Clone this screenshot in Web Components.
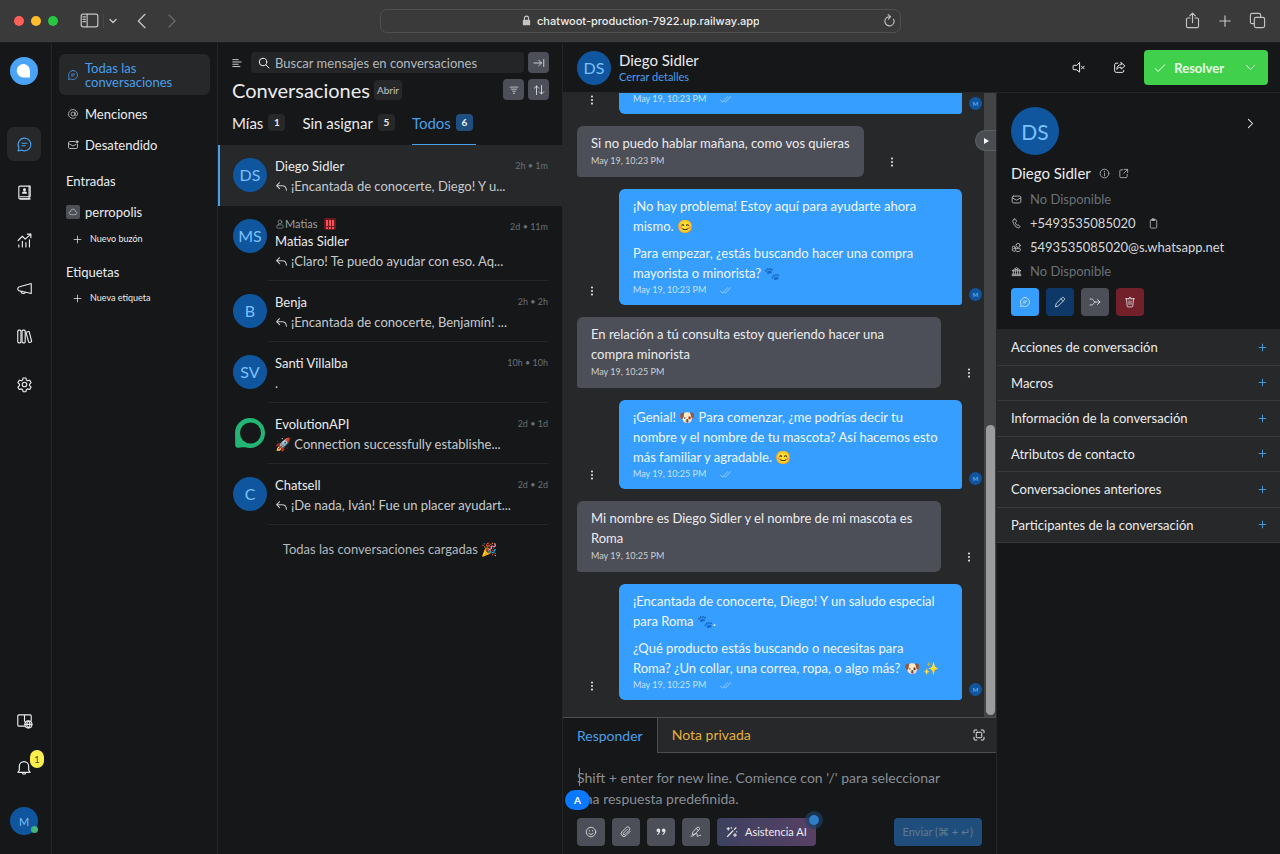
<!DOCTYPE html>
<html lang="es">
<head>
<meta charset="utf-8">
<meta name="viewport" content="width=device-width, initial-scale=1">
<title>Chatwoot</title>
<style>
  :root {
    --bg: #151718;
    --panel: #262829;
    --line: #242627;
    --line-strong: #4c4e52;
    --text: #ececee;
    --muted: #9ba1a6;
    --dim: #697177;
    --blue: #369eff;
    --link: #4a9fea;
    --slate: #4c4f57;
    --avatar: #10569e;
    --avatar-text: #7cc0fb;
  }
  body {
    margin: 0;
    height: 100vh;
    display: flex;
    flex-direction: column;
    overflow: hidden;
    background: var(--bg);
    color: var(--text);
    font: 13px/20px Lato, "Liberation Sans", sans-serif;
  }
  .app { flex: 1; min-height: 0; display: flex; }
  .workspace { flex: 1; min-width: 0; display: flex; flex-direction: column; }
  .columns { flex: 1; min-height: 0; display: flex; }
</style>
</head>
<body>
  <browser-bar></browser-bar>
  <div class="app">
    <nav-rail></nav-rail>
    <side-menu></side-menu>
    <conversation-list>
      <conversation-item initials="DS" name="Diego Sidler" time="2h • 1m" reply active>¡Encantada de conocerte, Diego! Y u...</conversation-item>
      <conversation-item initials="MS" name="Matias Sidler" time="2d • 11m" assignee="Matias" reply>¡Claro! Te puedo ayudar con eso. Aq...</conversation-item>
      <conversation-item initials="B" name="Benja" time="2h • 2h" reply>¡Encantada de conocerte, Benjamín! ...</conversation-item>
      <conversation-item initials="SV" name="Santi Villalba" time="10h • 10h">.</conversation-item>
      <conversation-item logo name="EvolutionAPI" time="2d • 1d">🚀 Connection successfully establishe...</conversation-item>
      <conversation-item initials="C" name="Chatsell" time="2d • 2d" reply>¡De nada, Iván! Fue un placer ayudart...</conversation-item>
    </conversation-list>
    <div class="workspace">
      <chat-header></chat-header>
      <div class="columns">
        <chat-pane>
          <chat-message out time="May 19, 10:23 PM"></chat-message>
          <chat-message time="May 19, 10:23 PM"><p>Si no puedo hablar mañana, como vos quieras</p></chat-message>
          <chat-message out time="May 19, 10:23 PM"><p>¡No hay problema! Estoy aquí para ayudarte ahora<br>mismo. 😊</p><p>Para empezar, ¿estás buscando hacer una compra<br>mayorista o minorista? 🐾</p></chat-message>
          <chat-message wide time="May 19, 10:25 PM"><p>En relación a tú consulta estoy queriendo hacer una<br>compra minorista</p></chat-message>
          <chat-message out time="May 19, 10:25 PM"><p>¡Genial! 🐶 Para comenzar, ¿me podrías decir tu<br>nombre y el nombre de tu mascota? Así hacemos esto<br>más familiar y agradable. 😊</p></chat-message>
          <chat-message wide time="May 19, 10:25 PM"><p>Mi nombre es Diego Sidler y el nombre de mi mascota es<br>Roma</p></chat-message>
          <chat-message out time="May 19, 10:25 PM"><p>¡Encantada de conocerte, Diego! Y un saludo especial<br>para Roma 🐾.</p><p>¿Qué producto estás buscando o necesitas para<br>Roma? ¿Un collar, una correa, ropa, o algo más? 🐶 ✨</p></chat-message>
        </chat-pane>
        <contact-panel></contact-panel>
      </div>
    </div>
  </div>

<script>
// Styles every shadow root starts from.
const BASE = `
  *, :host { box-sizing: border-box; }
  button, input, textarea { font: inherit; color: inherit; background: none; border: 0; padding: 0; margin: 0; }
  button { cursor: pointer; white-space: nowrap; }
  a { color: inherit; text-decoration: none; }
  h1, h2, h3, p, ul { margin: 0; padding: 0; font-weight: 400; list-style: none; }
  input:focus, textarea:focus { outline: none; }
`

// Line icons on a 24x24 grid.
const ICONS = {
  chat: '<path d="M12 3a9 9 0 1 1-4.3 16.9L3 21l1.1-4.7A9 9 0 0 1 12 3z"/><path d="M8.5 10.3h7M8.5 13.8h4.5"/>',
  contacts: '<path d="M5.500 3h13v18h-13a1.500 1.500 0 0 1-1.500-1.500v-15A1.500 1.500 0 0 1 5.500 3z"/><path d="M20 3v15H5.500M18.500 3H20M20 21H6"/><circle cx="12" cy="8" r="1.300" fill="currentColor"/><path d="M9.300 12.800c0-2.200 5.400-2.200 5.400 0z" fill="currentColor"/>',
  reports: '<path d="M3 12l6-6 4 4 8-7M16 3h5v5M4 21v-3M9 21v-8M14 21v-6M19 21V11"/>',
  megaphone: '<path d="M21.500 5v14L6 15.500a3 3 0 0 1-3.500-3.400A3 3 0 0 1 5 9.500z"/><path d="M7 16c.300 3.500 5 4 6.200 1.400"/>',
  library: '<rect x="2.500" y="3" width="4.500" height="18" rx="1.500"/><rect x="8.500" y="3" width="4.500" height="18" rx="1.500"/><path d="M15 5.800l2.500-.800a1 1 0 0 1 1.300.700L22 18.600a1 1 0 0 1-.800 1.200l-2.200.600a1 1 0 0 1-1.200-.700L14.300 7a1 1 0 0 1 .700-1.200z"/>',
  gear: '<circle cx="12" cy="12" r="3.200"/><path d="M10 2.800h4l.7 3 1.700 1 3-.9 2 3.500-2.300 2.100v2l2.300 2.100-2 3.500-3-.9-1.700 1-.7 3h-4l-.7-3-1.700-1-3 .9-2-3.500 2.300-2.100v-2L2.600 9.400l2-3.500 3 .9 1.700-1z"/>',
  docs: '<path d="M12 20H4a1.500 1.500 0 0 1-1.500-1.500v-13A1.500 1.500 0 0 1 4 4h16a1.500 1.500 0 0 1 1.500 1.500V12M12 4v9"/><circle cx="17.500" cy="17.500" r="5"/><path d="M12.500 17.500h10M17.500 12.500c-2.800 3-2.800 7 0 10 2.800-3 2.800-7 0-10z"/>',
  bell: '<path d="M12 2.500a7 7 0 0 1 7 7V15l2 3.500H3L5 15V9.500a7 7 0 0 1 7-7zM9.500 19c0 3 5 3 5 0"/>',
  at: '<circle cx="12" cy="12" r="4"/><path d="M16 8v5.500c0 3.500 5 3 5-1.500a9 9 0 1 0-4 7.500"/>',
  mailUnread: '<path d="M16 5H5.500A2.500 2.500 0 0 0 3 7.500v9A2.500 2.500 0 0 0 5.500 19h13a2.500 2.500 0 0 0 2.500-2.500V10M3 9l9 5 6-3.300"/><circle cx="20" cy="5.500" r="2" fill="currentColor"/>',
  mail: '<rect x="2.500" y="4.500" width="19" height="15" rx="3"/><path d="M3 8.500l9 5 9-5"/>',
  cloud: '<path d="M7 18.500a4 4 0 0 1-.5-8 5.500 5.500 0 0 1 11 0 4 4 0 0 1-.5 8z"/>',
  plus: '<path d="M12 3v18M3 12h18"/>',
  lines: '<path d="M2 4h13M2 9.500h20M2 15h13M2 20.500h17"/>',
  search: '<circle cx="10" cy="10" r="7.500"/><path d="M15.500 15.500L22 22"/>',
  panelIn: '<path d="M2 12h15M11.500 6.500L17 12l-5.500 5.500M21.500 5v14"/>',
  filter: '<path d="M2.500 5h19M5.500 10h13M8.500 15h7M10.500 20h3"/>',
  sort: '<path d="M7 21V4M2.500 8.500L7 4l4.500 4.500M17 3v17M12.500 15.500L17 20l4.500-4.500"/>',
  reply: '<path d="M8.500 5L3 10.500 8.500 16M3 10.500h10c5 0 8 3 8 8.500"/>',
  person: '<circle cx="12" cy="7" r="4.500"/><rect x="4" y="14" width="16" height="8" rx="4"/>',
  dots: '<g fill="currentColor" stroke="none"><circle cx="12" cy="3.500" r="2.600"/><circle cx="12" cy="12" r="2.600"/><circle cx="12" cy="20.500" r="2.600"/></g>',
  ticks: '<path d="M1 13l4.500 5L17 5.500M9.500 15.500l2.500 2.500L23 5.500"/>',
  mute: '<path d="M14 3.500v17L8 16H3.500A1.500 1.500 0 0 1 2 14.500v-5A1.500 1.500 0 0 1 3.500 8H8zM17.500 9.500l5 5M22.500 9.500l-5 5"/>',
  share: '<path d="M9 4H6a3 3 0 0 0-3 3v11a3 3 0 0 0 3 3h11a3 3 0 0 0 3-3v-1M15 3l7 6-7 6v-3.500c-4 0-6 1-8 4 .3-5.500 3-8.500 8-9z"/>',
  check: '<path d="M2.500 13l5.500 6L21.500 5.500"/>',
  down: '<path d="M3 7.500l9 9 9-9"/>',
  right: '<path d="M7.500 3l9 9-9 9"/>',
  left: '<path d="M16.500 2l-10 10 10 10"/>',
  info: '<circle cx="12" cy="12" r="9.500"/><path d="M12 11v6M12 7v.800"/>',
  open: '<path d="M11 4H6.500A2.500 2.500 0 0 0 4 6.500v12A2.500 2.500 0 0 0 6.500 21h11a2.500 2.500 0 0 0 2.500-2.500V14M14 3h7v7M21 3l-8.500 8.500"/>',
  phone: '<path d="M7 2.500L4.500 4C2.500 10 9 20.500 16 21.500l3-1.500c1-.8.8-1.800 0-2.500l-3-2.500-3 1c-2-1.500-3.200-3.500-3.500-6L12 8l-1.500-4.500C10 2.300 8.500 1.800 7 2.500z"/>',
  clipboard: '<rect x="5" y="4" width="14" height="18" rx="2"/><rect x="9" y="2" width="6" height="3.500" rx="1" fill="currentColor"/>',
  social: '<circle cx="15.500" cy="7.500" r="4.500"/><circle cx="6" cy="12" r="3"/><path d="M10 14.500h9.500c2 0 2 6.500-4 6.500s-5.500-2-5.500-6.500zM9 20c-4 1-7-.5-6.500-4"/>',
  bank: '<path d="M3 10l9-6.500L21 10zM5 10v8M9.500 10v8M14.500 10v8M19 10v8M2.500 18h19M2.500 21h19M9 7.500h6"/>',
  pencil: '<path d="M3 21l1.500-6L16 3.500c2.500-2.500 7 2 4.500 4.500L9 19.500zM14 5.500l4.500 4.500"/>',
  merge: '<path d="M2 6h3.500c3.500 0 3.500 6 7 6H22M2 18h3.500c3.500 0 3.500-6 7-6M17 7l5 5-5 5"/>',
  trash: '<path d="M3 5.500h18M9 5.500c0-4 6-4 6 0M5 5.500L6.300 20a2 2 0 0 0 2 1.800h7.400a2 2 0 0 0 2-1.800L19 5.500M10 10v7M14 10v7"/>',
  expand: '<rect x="6.500" y="6.500" width="11" height="11" rx="2"/><path d="M2 7.500V4a2 2 0 0 1 2-2h3.500M16.500 2H20a2 2 0 0 1 2 2v3.500M22 16.500V20a2 2 0 0 1-2 2h-3.500M7.500 22H4a2 2 0 0 1-2-2v-3.500"/>',
  emoji: '<circle cx="12" cy="12" r="9.500"/><path d="M7.500 14.500c2 3.300 7 3.300 9 0M8.800 9v1M15.200 9v1"/>',
  attach: '<path d="M20.500 10.500l-8.500 8.700a5.500 5.500 0 0 1-8-7.700l8.500-8.500a3.900 3.900 0 0 1 6 5.500L10 17a2 2 0 0 1-3-2.800l7.500-7.500"/>',
  quote: '<g fill="currentColor" stroke="none"><path d="M3 8.500a3.600 3.600 0 0 1 7.400 0c0 4.200-1.800 7.400-4.800 9.300-1.300.5-1.700-.9-.7-1.700 1.400-1.100 2.200-2.200 2.500-3.900C5 12.800 3 11 3 8.500z"/><path d="M13.600 8.500a3.600 3.600 0 0 1 7.400 0c0 4.200-1.800 7.400-4.800 9.300-1.300.5-1.700-.9-.7-1.700 1.400-1.100 2.200-2.200 2.500-3.900-2.400.6-4.400-1.200-4.400-3.700z"/></g>',
  sign: '<path d="M4.500 16.500L6 11.500l8-8.500c2.500-2.500 6.500 1 4.300 4L10.500 15.500zM12.500 5l4.300 4M2 20.500c5 1 8-5.500 11-5.500 3.500 0-1 5.500 2 5.500 2.500 0 2.500-2 6.500-2"/>',
  wand: '<path d="M3 21L14 9.500M16.500 7L20 3.500M4.500 3v5M2 5.500h5M18 15v6M15 18h6M10.500 2.500v2M21 11.500h.5" stroke-width="2.200"/>',
  lock: '<g stroke="none" fill="currentColor"><rect x="4" y="10.500" width="16" height="12" rx="2"/></g><path d="M7.500 11V7a4.500 4.500 0 0 1 9 0v4" stroke-width="2.400"/>',
  reload: '<path d="M19.500 9.500A8.500 8.500 0 1 1 13 5M9.500 1L14 5l-4 4.500"/>',
  sidebar: '<rect x="1.500" y="4" width="21" height="16" rx="2.500"/><path d="M9 4v16M3.800 7.500h3M3.800 10.500h3M3.800 13.500h3"/>',
  upload: '<path d="M8.500 8.500h-3a2 2 0 0 0-2 2v9.500a2 2 0 0 0 2 2h13a2 2 0 0 0 2-2v-9.500a2 2 0 0 0-2-2h-3M12 15V2M8 5.500L12 1.500l4 4"/>',
  copies: '<rect x="2" y="2" width="14.500" height="14.500" rx="2.500"/><rect x="7.500" y="7.500" width="14.500" height="14.500" rx="2.500" fill="#3a3a3a"/>',
}

const define = (name, render) => {
  customElements.define(name, class extends HTMLElement {
    connectedCallback() {
      if (this.shadowRoot) return
      this.attachShadow({ mode: 'open' }).innerHTML = render(this)
    }
  })
}

const icon = (name, size = 14, weight = 1.6) =>
  `<app-icon name="${name}" size="${size}" weight="${weight}"></app-icon>`

define('app-icon', (el) => {
  const size = el.getAttribute('size') || 14
  return `
    <style>:host { display: inline-flex; flex: none; } svg { display: block; }</style>
    <svg width="${size}" height="${size}" viewBox="0 0 24 24" fill="none" stroke="currentColor"
      stroke-width="${el.getAttribute('weight') || 1.6}" stroke-linecap="round" stroke-linejoin="round" aria-hidden="true">${ICONS[el.getAttribute('name')]}</svg>`
})

define('user-avatar', () => `
  <style>
    :host {
      --size: 34px;
      display: inline-flex; flex: none; align-items: center; justify-content: center;
      width: var(--size); height: var(--size); border-radius: 50%;
      background: var(--avatar); color: var(--avatar-text);
      font-size: 16px; line-height: 1;
    }
  </style>
  <slot></slot>`)

// Square tool button, coloured through --fill.
define('tool-button', (el) => `
  <style>${BASE}
    :host { display: inline-flex; flex: none; }
    button {
      width: var(--side, 28px); height: var(--side, 28px); border-radius: 4px;
      display: flex; align-items: center; justify-content: center;
      background: var(--fill, var(--slate)); color: #dfe3e6;
    }
  </style>
  <button type="button" aria-label="${el.getAttribute('label')}">${icon(el.getAttribute('icon'), el.getAttribute('size') || 12, 1.7)}</button>`)

define('browser-bar', () => `
  <style>${BASE}
    :host {
      display: grid; grid-template-columns: 1fr minmax(200px, 521px) 1fr; align-items: center;
      flex: none; height: 43px; padding-bottom: 1px; background: #3a3a3a; border-bottom: 1px solid #1d1e1f; color: #c4c4c4;
    }
    .left, .right, .lights { display: flex; align-items: center; }
    .left { padding-left: 14px; }
    .lights { gap: 7px; margin-right: 22px; }
    .lights i { width: 10px; height: 10px; border-radius: 50%; background: #fe5f57; }
    .lights i:nth-child(2) { background: #febc2e; }
    .lights i:nth-child(3) { background: #28c840; }
    .left button, .right button { display: flex; }
    .menu { margin: 0 17px 0 4px; padding-left: 5px; border-left: 1px solid #484848; height: 14px; align-items: center; }
    .back { margin-right: 14px; }
    .forward { color: #6a6a6a; }
    .right { justify-content: flex-end; gap: 17px; padding-right: 14px; }
    .address {
      display: flex; align-items: center; justify-content: center; gap: 5px; position: relative;
      height: 24px; border: 1px solid #505050; border-radius: 7px;
    }
    .address input { width: 222px; color: #ececec; font-family: Inter, sans-serif; font-size: 11px; font-weight: 500; field-sizing: content; }
    .reload { position: absolute; right: 4px; display: flex; }
  </style>
  <div class="left">
    <div class="lights"><i></i><i></i><i></i></div>
    <button type="button" aria-label="Barra lateral">${icon('sidebar', 19, 1.5)}</button>
    <button class="menu" type="button" aria-label="Grupos">${icon('down', 8, 4)}</button>
    <button class="back" type="button" aria-label="Atrás">${icon('left', 16, 2)}</button>
    <button class="forward" type="button" aria-label="Adelante">${icon('right', 16, 2)}</button>
  </div>
  <div class="address">
    ${icon('lock', 11)}
    <input type="text" aria-label="Dirección" value="chatwoot-production-7922.up.railway.app" readonly>
    <button class="reload" type="button" aria-label="Recargar">${icon('reload', 13, 2)}</button>
  </div>
  <div class="right">
    <button type="button" aria-label="Compartir">${icon('upload', 17, 1.6)}</button>
    <button type="button" aria-label="Nueva pestaña">${icon('plus', 14, 2)}</button>
    <button type="button" aria-label="Pestañas">${icon('copies', 17, 1.6)}</button>
  </div>`)

define('nav-rail', () => {
  const links = [['chat', 'Conversaciones'], ['contacts', 'Contactos'], ['reports', 'Informes'],
    ['megaphone', 'Campañas'], ['library', 'Centro de ayuda'], ['gear', 'Ajustes']]
  return `
  <style>${BASE}
    :host {
      display: flex; flex-direction: column; align-items: center; flex: none; width: 52px;
      padding: 14px 3px 19px 0; border-right: 1px solid var(--line);
    }
    .logo { width: 28px; height: 28px; margin-bottom: 42px; }
    nav, .foot { display: flex; flex-direction: column; align-items: center; gap: 14px; }
    nav a, .foot a {
      width: 34px; height: 34px; border-radius: 7px; position: relative;
      display: flex; align-items: center; justify-content: center;
    }
    nav a:first-child { background: #26282a; color: var(--link); }
    .foot { margin-top: auto; }
    .badge {
      position: absolute; top: -1px; left: 23px; width: 14px; height: 18px; border-radius: 7px;
      background: #fcee4c; color: #56510e; font-size: 10px; line-height: 18px; text-align: center;
    }
    .me { position: relative; margin-top: 8px; }
    .me user-avatar { --size: 28px; font-size: 11px; }
    .me button, .me { display: flex; }
    .me i { position: absolute; right: 0; bottom: 2px; width: 7px; height: 7px; border-radius: 50%; background: #44b37c; }
  </style>
  <svg class="logo" viewBox="0 0 28 28" aria-label="Chatwoot"><circle cx="14" cy="14" r="14" fill="#4aa3f4"/><path d="M14 7h-.5a6.800 6.800 0 0 0 0 13.600H20V14a6.800 6.800 0 0 0-6-7z" fill="#fff"/></svg>
  <nav>${links.map(([name, label]) => `<a href="#" aria-label="${label}">${icon(name, 17)}</a>`).join('')}</nav>
  <div class="foot">
    <a href="#" aria-label="Documentación">${icon('docs', 17)}</a>
    <a href="#" aria-label="Notificaciones">${icon('bell', 16, 1.8)}<span class="badge">1</span></a>
    <div class="me"><button type="button" aria-label="Perfil"><user-avatar>M</user-avatar></button><i></i></div>
  </div>`
})

define('side-menu', () => `
  <style>${BASE}
    :host { display: flex; flex-direction: column; flex: none; width: 166px; padding: 11px 7px; border-right: 1px solid var(--line); }
    a, .new { display: flex; align-items: center; gap: 6px; padding: 0 8px; }
    a { height: 31px; color: var(--text); }
    a app-icon { color: #c1c5c9; }
    a.on, a.on app-icon { color: var(--link); }
    a.on { height: 41px; margin-bottom: 3px; background: #26282a; border-radius: 6px; line-height: 14px; }
    h2 { font-size: 13px; padding: 0 7px; height: 22px; line-height: 22px; margin-top: 10px; }
    .box { padding: 2px; margin: 0 -1px; border-radius: 2px; background: var(--slate); }
    .inbox { margin: 4px 0 0; }
    .new { height: 24px; font-size: 9px; padding-left: 14px; gap: 8px; line-height: 20px; }
    h2 + .new { margin-top: 3px; }
  </style>
  <a class="on" href="#">${icon('chat', 12)}<span>Todas las<br>conversaciones</span></a>
  <a href="#">${icon('at', 12)}Menciones</a>
  <a href="#">${icon('mailUnread', 12, 1.8)}Desatendido</a>
  <h2>Entradas</h2>
  <a class="inbox" href="#"><app-icon class="box" name="cloud" size="10"></app-icon>perropolis</a>
  <button class="new" type="button">${icon('plus', 9, 2)}Nuevo buzón</button>
  <h2>Etiquetas</h2>
  <button class="new" type="button">${icon('plus', 9, 2)}Nueva etiqueta</button>`)

define('conversation-list', () => `
  <style>${BASE}
    :host { display: flex; flex-direction: column; flex: none; width: 345px; border-right: 1px solid var(--line); }
    header { padding: 9px 13px 0 14px; }
    .row { display: flex; align-items: center; gap: 4px; height: 21px; }
    .row button.toggle { display: flex; margin-right: 5px; }
    tool-button { --side: 21px; }
    label { flex: 1; min-width: 0; display: flex; align-items: center; gap: 5px; height: 21px; padding: 0 7px; border-radius: 4px; background: #232527; }
    input { flex: 1; min-width: 0; }
    input::placeholder { color: #b4b8bc; opacity: 1; }
    .head { margin-top: 6px; }
    h1 { font-size: 20px; line-height: 24px; }
    .state { margin-right: auto; padding: 0 3px; border-radius: 4px; background: #26282a; font-size: 10px; line-height: 20px; color: #c1c5c9; }
    .tabs { display: flex; gap: 17px; margin-top: 1px; }
    .tabs button { display: flex; align-items: center; gap: 5px; height: 44px; border-bottom: 1px solid transparent; font-size: 15px; }
    .tabs b { width: 17px; border-radius: 4px; background: #26282a; font-size: 10px; line-height: 17px; text-align: center; }
    .tabs .on { color: var(--link); border-color: var(--link); padding-right: 3px; }
    .tabs .on b { background: #1f4f80; color: #e6f0fa; }
    .end { padding: 14px 0; text-align: center; color: #b4b8bc; }
  </style>
  <header>
    <div class="row">
      <button class="toggle" type="button" aria-label="Menú">${icon('lines', 10, 2)}</button>
      <label>${icon('search', 12, 2)}<input type="search" aria-label="Buscar" placeholder="Buscar mensajes en conversaciones"></label>
      <tool-button icon="panelIn" label="Cambiar vista"></tool-button>
    </div>
    <div class="row head">
      <h1>Conversaciones</h1><span class="state">Abrir</span>
      <tool-button icon="filter" size="10" label="Filtrar"></tool-button>
      <tool-button icon="sort" label="Ordenar"></tool-button>
    </div>
    <div class="tabs" role="tablist">
      <button type="button" role="tab">Mías <b>1</b></button>
      <button type="button" role="tab">Sin asignar <b>5</b></button>
      <button class="on" type="button" role="tab" aria-selected="true">Todos <b>6</b></button>
    </div>
  </header>
  <slot></slot>
  <p class="end">Todas las conversaciones cargadas 🎉</p>`)

define('conversation-item', (el) => {
  const assignee = el.getAttribute('assignee')
  const avatar = el.hasAttribute('logo')
    ? '<svg class="ring" width="34" height="34" viewBox="0 0 34 34" aria-hidden="true"><path d="M17 2a15 15 0 0 1 0 30 15 15 0 0 1-5-.8C8 31 5 32 3.500 31.500 1.500 31 2.500 27 2 17A15 15 0 0 1 17 2z" fill="#22b573"/><circle cx="17.500" cy="17" r="10.500" fill="#151718"/></svg>'
    : `<user-avatar>${el.getAttribute('initials')}</user-avatar>`
  return `
  <style>${BASE}
    :host { display: flex; padding: 0 14px 0 13px; border-left: 2px solid transparent; }
    :host([active]) { background: var(--panel); border-color: var(--link); }
    user-avatar, .ring { margin-top: 13px; flex: none; }
    .body { flex: 1; min-width: 0; display: flex; margin-left: 1px; padding: 11px 0 9px 7px; border-bottom: 1px solid var(--line); }
    :host([active]) .body { border-color: transparent; }
    .text { flex: 1; min-width: 0; }
    h3 { font-size: 13px; line-height: 20px; }
    .preview { display: flex; align-items: center; gap: 3px; line-height: 20px; color: #c6cacd; white-space: nowrap; }
    .who { display: flex; align-items: center; height: 14px; font-size: 11px; color: var(--muted); }
    .who b { display: flex; align-items: center; justify-content: center; gap: 1px; width: 12px; height: 12px; margin-left: 7px; border-radius: 2px; background: #6b1a20; }
    .who b i { width: 2px; height: 9px; background: linear-gradient(#ff4d55 6px, transparent 6px 7px, #ff4d55 7px); }
    time { font-size: 9px; line-height: 20px; color: var(--dim); white-space: nowrap; }
  </style>
  ${avatar}
  <div class="body">
    <div class="text">
      ${assignee ? `<div class="who">${icon('person', 10)}${assignee}<b><i></i><i></i><i></i></b></div>` : ''}
      <h3>${el.getAttribute('name')}</h3>
      <p class="preview">${el.hasAttribute('reply') ? icon('reply', 13, 2) : ''}<slot></slot></p>
    </div>
    <time>${el.getAttribute('time')}</time>
  </div>`
})

define('chat-header', () => `
  <style>${BASE}
    :host { display: flex; align-items: center; flex: none; height: 50px; padding: 0 12px 0 14px; border-bottom: 1px solid var(--line); }
    .who { margin: 0 auto 0 8px; }
    h2 { font-size: 15px; line-height: 18px; }
    a { display: block; font-size: 11px; line-height: 15px; color: var(--link); }
    .tool { display: flex; margin-right: 28px; }
    .tool + .tool { margin-right: 18px; }
    .resolve { display: flex; border-radius: 4px; background: #40d04c; color: #e8ffe9; }
    .resolve button { display: flex; align-items: center; gap: 8px; height: 35px; padding: 0 10px; font-weight: 700; }
    .resolve button + button { padding: 0 12px 0 11px; }
  </style>
  <user-avatar>DS</user-avatar>
  <div class="who"><h2>Diego Sidler</h2><a href="#">Cerrar detalles</a></div>
  <button class="tool" type="button" aria-label="Silenciar">${icon('mute', 13, 1.8)}</button>
  <button class="tool" type="button" aria-label="Compartir">${icon('share', 13, 1.8)}</button>
  <div class="resolve">
    <button type="button">${icon('check', 12, 2)}Resolver</button>
    <button type="button" aria-label="Más acciones">${icon('down', 11, 2)}</button>
  </div>`)

define('chat-message', (el) => `
  <style>${BASE}
    :host { display: flex; align-items: flex-end; flex: none; padding-left: 14px; }
    :host([out]) { padding-left: 23px; }
    .bubble { padding: 7px 14px 8px; border-radius: 6px 6px 6px 3px; background: var(--slate); }
    :host([wide]) .bubble { flex: 0 1 364px; }
    :host([out]) .bubble { flex: 1; margin-left: 21px; border-radius: 6px 6px 3px 6px; background: var(--blue); color: #eff7ff; }
    ::slotted(p) { margin: 0; white-space: nowrap; }
    ::slotted(p:not(:first-child)) { margin-top: 7px; }
    .meta { display: flex; align-items: center; gap: 14px; height: 16px; font-size: 9px; color: #cdd0d4; }
    :host([out]) .meta { height: 14px; color: #c5e2ff; }
    .more { display: flex; width: 12px; justify-content: center; margin: 0 0 10px 22px; color: #d9dcdf; }
    :host([out]) .more { margin: 0 0 9px; }
    user-avatar { --size: 13px; margin: 0 2px 4px 7px; font-size: 6px; }
  </style>
  ${el.hasAttribute('out')
    ? `<button class="more" type="button" aria-label="Más">${icon('dots', 10)}</button>
       <div class="bubble"><slot></slot><div class="meta">${el.getAttribute('time')}${icon('ticks', 11, 1.4)}</div></div>
       <user-avatar>M</user-avatar>`
    : `<div class="bubble"><slot></slot><div class="meta">${el.getAttribute('time')}</div></div>
       <button class="more" type="button" aria-label="Más">${icon('dots', 10)}</button>`}`)

define('chat-pane', () => `
  <style>${BASE}
    :host { display: flex; flex-direction: column; flex: 1; min-width: 0; position: relative; border-right: 1px solid var(--line); }
    .scroller { flex: 1; min-height: 0; display: flex; background: var(--panel); }
    .feed { flex: 1; min-width: 0; display: flex; flex-direction: column; justify-content: flex-end; gap: 12px; padding-bottom: 17px; overflow: hidden; }
    .bar { width: 12px; padding: 332px 1px 2px 2px; background: #424445; display: flex; }
    .bar i { flex: 1; border-radius: 5px; background: #9c9c9c; }
    .fold {
      position: absolute; top: 37px; right: 0; width: 21px; height: 21px;
      display: flex; align-items: center; justify-content: center;
      border: 1px solid #5d6065; border-right: 0; border-radius: 11px 0 0 11px; background: #4a4d52;
    }
    .fold::after { content: ""; border: 3px solid transparent; border-left: 5px solid #fff; border-right: 0; }
  </style>
  <div class="scroller">
    <div class="feed"><slot></slot></div>
    <div class="bar"><i></i></div>
  </div>
  <button class="fold" type="button" aria-label="Plegar"></button>
  <reply-box></reply-box>`)

define('reply-box', () => `
  <style>${BASE}
    :host { display: block; flex: none; border-top: 1px solid var(--line-strong); }
    .tabs { display: flex; height: 35px; background: var(--panel); }
    .tabs button { padding: 0 14px; font-size: 14px; }
    .tabs .on { color: var(--link); background: var(--bg); border-right: 1px solid var(--line-strong); }
    .rest { flex: 1; display: flex; align-items: center; justify-content: space-between; border-bottom: 1px solid var(--line-strong); }
    .tabs .note { color: #e3b03c; }
    .rest .expand { display: flex; padding: 0 11px; }
    .editor { position: relative; padding: 14px 14px 8px; display: flex; }
    textarea { flex: 1; min-width: 0; height: 42px; resize: none; overflow: hidden; font-size: 14px; line-height: 21px; }
    textarea::placeholder { color: #8a8e96; opacity: 1; }
    .caret { position: absolute; left: 16px; top: 15px; width: 1px; height: 18px; background: var(--blue); }
    .lang { position: absolute; left: 2px; top: 37px; width: 25px; height: 20px; border-radius: 10px; background: #0a78ff; color: #fff; font-size: 10px; font-weight: 700; line-height: 20px; text-align: center; }
    .tools { display: flex; gap: 7px; padding: 1px 14px 8px; }
    .ai { position: relative; display: flex; align-items: center; gap: 7px; height: 28px; padding: 0 9px; border-radius: 4px; background: linear-gradient(100deg, #3c4160, #584064); font-size: 11px; }
    .ai i { position: absolute; top: -3px; right: -3px; width: 10px; height: 10px; border-radius: 50%; background: #2f7cc9; box-shadow: 0 0 0 4px #1c4268aa; }
    .send { margin-left: auto; height: 28px; padding: 0 9px; border-radius: 4px; background: #1f4e7c; color: #617990; font-size: 11px; }
  </style>
  <div class="tabs">
    <button class="on" type="button">Responder</button>
    <div class="rest">
      <button class="note" type="button">Nota privada</button>
      <button class="expand" type="button" aria-label="Expandir">${icon('expand', 12, 2)}</button>
    </div>
  </div>
  <div class="editor">
    <textarea aria-label="Mensaje" placeholder="Shift + enter for new line. Comience con '/' para seleccionar&#10;una respuesta predefinida."></textarea>
    <span class="caret"></span>
    <span class="lang">A</span>
  </div>
  <div class="tools">
    <tool-button icon="emoji" label="Emoji"></tool-button>
    <tool-button icon="attach" label="Adjuntar"></tool-button>
    <tool-button icon="quote" label="Citar"></tool-button>
    <tool-button icon="sign" label="Firma"></tool-button>
    <button class="ai" type="button">${icon('wand', 12, 2)}Asistencia AI<i></i></button>
    <button class="send" type="button">Enviar (⌘ + ↵)</button>
  </div>`)

define('contact-panel', () => {
  const sections = ['Acciones de conversación', 'Macros', 'Información de la conversación',
    'Atributos de contacto', 'Conversaciones anteriores', 'Participantes de la conversación']
  return `
  <style>${BASE}
    :host { display: block; flex: none; width: 283px; }
    .card { padding: 14px 14px 13px; }
    .top { display: flex; justify-content: space-between; align-items: flex-start; }
    .top user-avatar { --size: 48px; font-size: 21px; }
    .top button { display: flex; margin: 11px 10px 0 0; }
    .name { display: flex; align-items: center; gap: 8px; margin-top: 7px; height: 22px; }
    h2 { font-size: 15px; }
    .name a { display: flex; color: #b4b8bc; }
    ul { margin-top: 3px; }
    li { display: flex; align-items: center; gap: 8px; height: 24px; color: #d5d8db; }
    li app-icon { color: #b4b8bc; }
    li.none { color: var(--dim); }
    li a { margin-right: 4px; }
    li button { display: flex; }
    .actions { display: flex; gap: 7px; margin-top: 5px; }
    .groups { display: grid; grid-auto-rows: 1fr; height: 214px; background: #262829; border-top: 1px solid var(--line); }
    .groups button { display: flex; align-items: center; justify-content: space-between; padding: 0 13px 0 14px; border-bottom: 1px solid #37393b; }
    .groups app-icon { color: var(--link); }
  </style>
  <div class="card">
    <div class="top"><user-avatar>DS</user-avatar><button type="button" aria-label="Cerrar">${icon('right', 11, 2.2)}</button></div>
    <div class="name"><h2>Diego Sidler</h2><a href="#" aria-label="Información">${icon('info', 11, 1.8)}</a><a href="#" aria-label="Abrir">${icon('open', 11, 1.8)}</a></div>
    <ul>
      <li class="none">${icon('mail', 11, 2)}No Disponible</li>
      <li>${icon('phone', 11, 2)}<a href="#">+5493535085020</a><button type="button" aria-label="Copiar">${icon('clipboard', 11, 1.8)}</button></li>
      <li>${icon('social', 11, 2)}<a href="#">5493535085020@s.whatsapp.net</a></li>
      <li class="none">${icon('bank', 11, 2)}No Disponible</li>
    </ul>
    <div class="actions">
      <tool-button icon="chat" label="Nuevo mensaje" style="--fill: #369eff"></tool-button>
      <tool-button icon="pencil" label="Editar" style="--fill: #0d3868"></tool-button>
      <tool-button icon="merge" label="Combinar"></tool-button>
      <tool-button icon="trash" label="Eliminar" style="--fill: #72202a"></tool-button>
    </div>
  </div>
  <div class="groups">${sections.map((title) => `<button type="button">${title}${icon('plus', 9, 2.4)}</button>`).join('')}</div>`
})
</script>
</body>
</html>
